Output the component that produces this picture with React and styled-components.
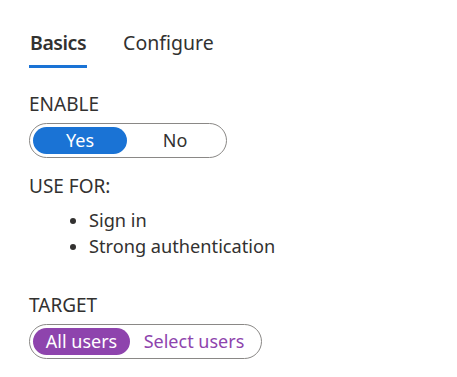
import React, { useState } from "react";
import styled, { createGlobalStyle } from "styled-components";

const GlobalStyle = createGlobalStyle`
  body {
    margin: 0;
    background: #fff;
    font-family: "Noto Sans", "Open Sans", sans-serif;
    color: #323130;
  }
`;

const Page = styled.div`
  padding: 29px 0 0 29px;
  width: 457px;
  height: 377px;
  box-sizing: border-box;
`;

const Tabs = styled.div`
  display: flex;
  gap: 35px;
  margin-bottom: 25px;
`;

const Tab = styled.div`
  font-size: 19.5px;
  line-height: 28px;
  padding: 0 1px 8px;
  font-weight: ${(p) => (p.$active ? 600 : 400)};
  letter-spacing: ${(p) => (p.$active ? "-0.45px" : "0")};
  color: #323130;
  border-bottom: 3px solid ${(p) => (p.$active ? "#1a73d5" : "transparent")};
`;

const Label = styled.div`
  font-size: 19px;
  line-height: 22px;
  margin-bottom: 8px;
`;

const Section = styled.div`
  margin-bottom: ${(p) => p.$gap || 17}px;
`;

const Toggle = styled.div`
  display: inline-flex;
  align-items: center;
  border: 1px solid #8a8886;
  border-radius: 18px;
  padding: 3px;
  height: 35px;
  box-sizing: border-box;
`;

const Option = styled.button`
  border: none;
  background: ${(p) => (p.$on ? p.$color : "transparent")};
  color: ${(p) => (p.$on ? "#fff" : p.$text)};
  font-family: inherit;
  font-size: 18px;
  height: 27px;
  border-radius: 14px;
  padding: 0;
  width: ${(p) => p.$w}px;
  cursor: pointer;
  line-height: 27px;
`;

const List = styled.ul`
  margin: 10px 0 0;
  padding-left: 60px;
  font-size: 18.2px;
  line-height: 26px;
`;

export default function App() {
  const [enable, setEnable] = useState(true);
  const [all, setAll] = useState(true);
  return (
    <Page>
      <GlobalStyle />
      <Tabs>
        <Tab $active>Basics</Tab>
        <Tab>Configure</Tab>
      </Tabs>
      <Section>
        <Label>ENABLE</Label>
        <Toggle>
          <Option $w={94} $on={enable} $color="#1a73d5" $text="#323130" onClick={() => setEnable(true)}>
            Yes
          </Option>
          <Option $w={96} $on={!enable} $color="#1a73d5" $text="#323130" onClick={() => setEnable(false)}>
            No
          </Option>
        </Toggle>
      </Section>
      <Section $gap={35}>
        <Label>USE FOR:</Label>
        <List>
          <li>Sign in</li>
          <li>Strong authentication</li>
        </List>
      </Section>
      <Section>
        <Label>TARGET</Label>
        <Toggle>
          <Option $w={97} $on={all} $color="#8e44ad" $text="#8e44ad" onClick={() => setAll(true)}>
            All users
          </Option>
          <Option $w={128} $on={!all} $color="#8e44ad" $text="#8e44ad" onClick={() => setAll(false)}>
            Select users
          </Option>
        </Toggle>
      </Section>
    </Page>
  );
}
